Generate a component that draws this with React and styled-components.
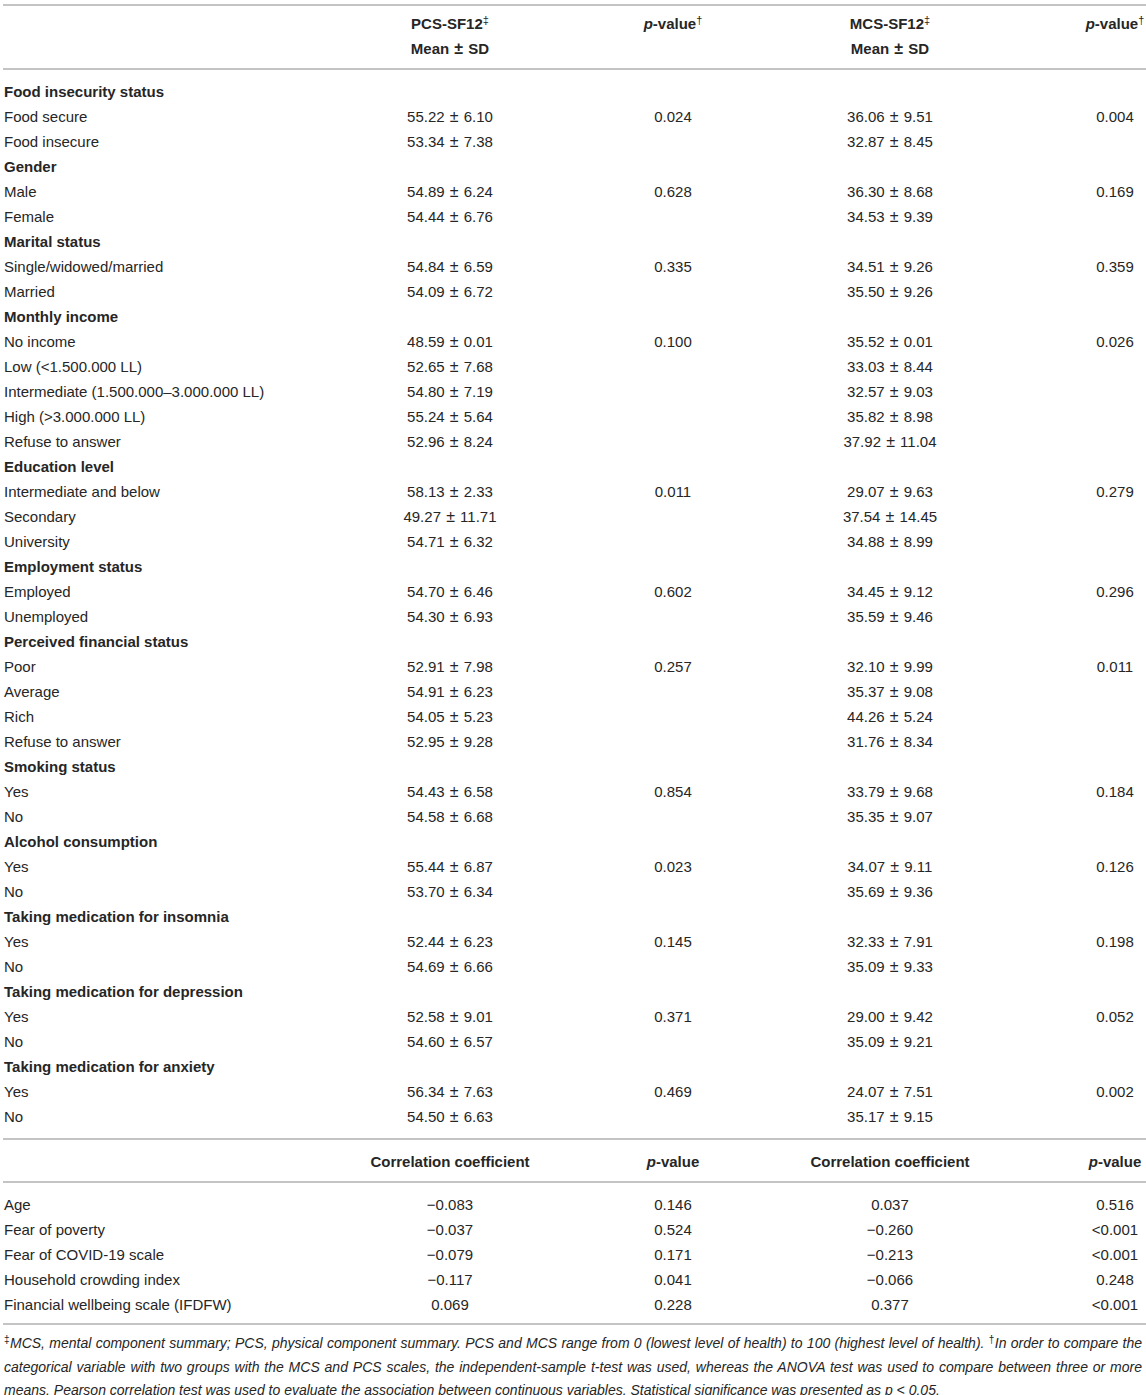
import React from "react";
import styled, { createGlobalStyle } from "styled-components";

const Global = createGlobalStyle`
  html, body { margin: 0; padding: 0; background: #fff; }
  body { font-family: "Liberation Sans", Arial, sans-serif; color: #262626; }
`;

const Page = styled.div`
  width: 1146px;
  padding: 4px 0 0 3px;
  box-sizing: border-box;
`;

const Section = styled.div`
  border-top: 2px solid #c4c4c4;
  padding: ${(p) => p.$pt}px 0 ${(p) => p.$pb}px;
`;

const Row = styled.div`
  display: grid;
  grid-template-columns: 337px 220px 226px 208px 1fr;
  font-size: 15px;
  line-height: 25px;
`;

const Cell = styled.div`
  text-align: ${(p) => (p.$left ? "left" : "center")};
  padding-left: ${(p) => (p.$last ? 90 : p.$left ? 1 : 0)}px;
  font-weight: ${(p) => (p.$bold ? 700 : 400)};
  white-space: nowrap;
`;

const Pm = styled.span`
  font-size: 16px;
  margin: 0 1px;
`;

const Sup = styled.sup`
  font-size: 11px;
  line-height: 0;
  vertical-align: 5px;
  font-weight: 400;
`;

const I = styled.i`
  font-style: italic;
`;

const Note = styled.p`
  margin: 0;
  border-top: 2px solid #c4c4c4;
  padding: 7px 4px 0 1px;
  font-size: 14px;
  line-height: 23px;
  font-style: italic;
  text-align: justify;
`;

const NoteSup = styled.span`
  font-size: 10px;
  position: relative;
  top: -5px;
  font-style: normal;
`;

const groups = [
  ["Food insecurity status", [
    ["Food secure", "55.22 ± 6.10", "0.024", "36.06 ± 9.51", "0.004"],
    ["Food insecure", "53.34 ± 7.38", "", "32.87 ± 8.45", ""],
  ]],
  ["Gender", [
    ["Male", "54.89 ± 6.24", "0.628", "36.30 ± 8.68", "0.169"],
    ["Female", "54.44 ± 6.76", "", "34.53 ± 9.39", ""],
  ]],
  ["Marital status", [
    ["Single/widowed/married", "54.84 ± 6.59", "0.335", "34.51 ± 9.26", "0.359"],
    ["Married", "54.09 ± 6.72", "", "35.50 ± 9.26", ""],
  ]],
  ["Monthly income", [
    ["No income", "48.59 ± 0.01", "0.100", "35.52 ± 0.01", "0.026"],
    ["Low (<1.500.000 LL)", "52.65 ± 7.68", "", "33.03 ± 8.44", ""],
    ["Intermediate (1.500.000–3.000.000 LL)", "54.80 ± 7.19", "", "32.57 ± 9.03", ""],
    ["High (>3.000.000 LL)", "55.24 ± 5.64", "", "35.82 ± 8.98", ""],
    ["Refuse to answer", "52.96 ± 8.24", "", "37.92 ± 11.04", ""],
  ]],
  ["Education level", [
    ["Intermediate and below", "58.13 ± 2.33", "0.011", "29.07 ± 9.63", "0.279"],
    ["Secondary", "49.27 ± 11.71", "", "37.54 ± 14.45", ""],
    ["University", "54.71 ± 6.32", "", "34.88 ± 8.99", ""],
  ]],
  ["Employment status", [
    ["Employed", "54.70 ± 6.46", "0.602", "34.45 ± 9.12", "0.296"],
    ["Unemployed", "54.30 ± 6.93", "", "35.59 ± 9.46", ""],
  ]],
  ["Perceived financial status", [
    ["Poor", "52.91 ± 7.98", "0.257", "32.10 ± 9.99", "0.011"],
    ["Average", "54.91 ± 6.23", "", "35.37 ± 9.08", ""],
    ["Rich", "54.05 ± 5.23", "", "44.26 ± 5.24", ""],
    ["Refuse to answer", "52.95 ± 9.28", "", "31.76 ± 8.34", ""],
  ]],
  ["Smoking status", [
    ["Yes", "54.43 ± 6.58", "0.854", "33.79 ± 9.68", "0.184"],
    ["No", "54.58 ± 6.68", "", "35.35 ± 9.07", ""],
  ]],
  ["Alcohol consumption", [
    ["Yes", "55.44 ± 6.87", "0.023", "34.07 ± 9.11", "0.126"],
    ["No", "53.70 ± 6.34", "", "35.69 ± 9.36", ""],
  ]],
  ["Taking medication for insomnia", [
    ["Yes", "52.44 ± 6.23", "0.145", "32.33 ± 7.91", "0.198"],
    ["No", "54.69 ± 6.66", "", "35.09 ± 9.33", ""],
  ]],
  ["Taking medication for depression", [
    ["Yes", "52.58 ± 9.01", "0.371", "29.00 ± 9.42", "0.052"],
    ["No", "54.60 ± 6.57", "", "35.09 ± 9.21", ""],
  ]],
  ["Taking medication for anxiety", [
    ["Yes", "56.34 ± 7.63", "0.469", "24.07 ± 7.51", "0.002"],
    ["No", "54.50 ± 6.63", "", "35.17 ± 9.15", ""],
  ]],
];

const corr = [
  ["Age", "−0.083", "0.146", "0.037", "0.516"],
  ["Fear of poverty", "−0.037", "0.524", "−0.260", "<0.001"],
  ["Fear of COVID-19 scale", "−0.079", "0.171", "−0.213", "<0.001"],
  ["Household crowding index", "−0.117", "0.041", "−0.066", "0.248"],
  ["Financial wellbeing scale (IFDFW)", "0.069", "0.228", "0.377", "<0.001"],
];

function Val({ v }) {
  if (!v.includes("±")) return v;
  const [a, b] = v.split(" ± ");
  return (
    <>
      {a} <Pm>±</Pm> {b}
    </>
  );
}

function DataRow({ r }) {
  return (
    <Row>
      <Cell $left>{r[0]}</Cell>
      <Cell><Val v={r[1]} /></Cell>
      <Cell>{r[2]}</Cell>
      <Cell><Val v={r[3]} /></Cell>
      <Cell $last>{r[4]}</Cell>
    </Row>
  );
}

export default function App() {
  return (
    <Page>
      <Global />
      <Section $pt={5} $pb={7}>
        <Row>
          <Cell $left />
          <Cell $bold>PCS-SF12<Sup>‡</Sup></Cell>
          <Cell $bold><I>p</I>-value<Sup>†</Sup></Cell>
          <Cell $bold>MCS-SF12<Sup>‡</Sup></Cell>
          <Cell $bold $last><I>p</I>-value<Sup>†</Sup></Cell>
        </Row>
        <Row>
          <Cell $left />
          <Cell $bold>Mean <Pm>±</Pm> SD</Cell>
          <Cell />
          <Cell $bold>Mean <Pm>±</Pm> SD</Cell>
          <Cell $last />
        </Row>
      </Section>
      <Section $pt={9} $pb={9}>
        {groups.map(([title, rows]) => (
          <React.Fragment key={title}>
            <Row>
              <Cell $left $bold>{title}</Cell>
            </Row>
            {rows.map((r, i) => (
              <DataRow key={title + i} r={r} />
            ))}
          </React.Fragment>
        ))}
      </Section>
      <Section $pt={9} $pb={7}>
        <Row>
          <Cell $left />
          <Cell $bold>Correlation coefficient</Cell>
          <Cell $bold><I>p</I>-value</Cell>
          <Cell $bold>Correlation coefficient</Cell>
          <Cell $bold $last><I>p</I>-value</Cell>
        </Row>
      </Section>
      <Section $pt={9} $pb={6}>
        {corr.map((r) => (
          <DataRow key={r[0]} r={r} />
        ))}
      </Section>
      <Note>
        <NoteSup>‡</NoteSup>MCS, mental component summary; PCS, physical component summary. PCS and MCS range from 0 (lowest level of health) to 100 (highest level of health). <NoteSup>†</NoteSup>In order to compare the categorical variable with two groups with the MCS and PCS scales, the independent-sample t-test was used, whereas the ANOVA test was used to compare between three or more means. Pearson correlation test was used to evaluate the association between continuous variables. Statistical significance was presented as p &lt; 0.05.
      </Note>
    </Page>
  );
}
